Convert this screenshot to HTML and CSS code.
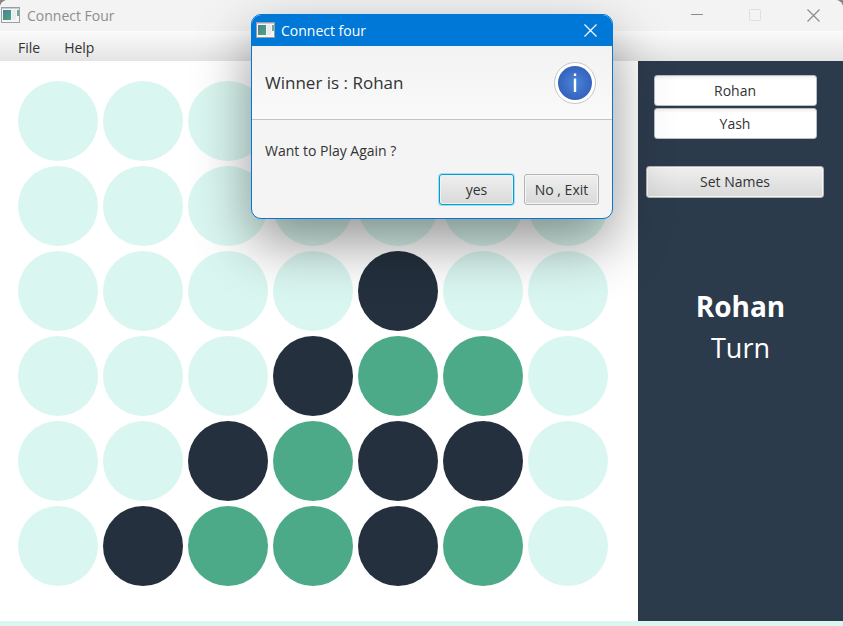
FILE: index.html
```html
<!DOCTYPE html>
<html lang="en">
<head>
<meta charset="utf-8">
<title>Connect Four</title>
<link rel="stylesheet" href="styles.css">
</head>
<body>
<svg class="defs" aria-hidden="true">
  <defs>
    <linearGradient id="pane" x1="0" y1="0" x2="1" y2="1">
      <stop offset="0" stop-color="#4b7fa0"/>
      <stop offset="1" stop-color="#4fa673"/>
    </linearGradient>
    <symbol id="app-icon" viewBox="0 0 19 16">
      <rect x="0.5" y="0.5" width="18" height="15" fill="#f4f6f6" stroke="#9a9fa6"/>
      <rect x="1" y="1" width="17" height="1" fill="#c9ced6"/>
      <rect x="2" y="3" width="8" height="10" fill="url(#pane)"/>
      <rect x="11" y="3" width="4" height="10" fill="#e9ecec"/>
      <rect x="16" y="3" width="2" height="6" fill="#4f9585" opacity="0.8"/>
    </symbol>
    <radialGradient id="info-fill">
      <stop offset="0" stop-color="#4a86d8"/>
      <stop offset="1" stop-color="#3561bd"/>
    </radialGradient>
  </defs>
</svg>

<div class="window">
  <header class="titlebar">
    <svg class="app-icon"><use href="#app-icon"/></svg>
    <h1 class="title">Connect Four</h1>
    <div class="controls">
      <button class="control" aria-label="Minimize"><svg width="13" height="13"><path d="M0 5.5H12" stroke="#8c8c8c"/></svg></button>
      <button class="control" aria-label="Maximize" disabled><svg width="13" height="13"><rect x="0.5" y="0.5" width="11" height="11" rx="1" fill="none" stroke="#dedede"/></svg></button>
      <button class="control" aria-label="Close"><svg width="13" height="13"><path d="M0.5 0.5L12.5 12.5M12.5 0.5L0.5 12.5" stroke="#8c8c8c" stroke-width="1.2"/></svg></button>
    </div>
  </header>
  <nav class="menubar">
    <button class="menu">File</button>
    <button class="menu">Help</button>
  </nav>
  <main class="game">
    <section class="board" aria-label="Board">
      <i></i><i></i><i></i><i></i><i></i><i></i><i></i>
      <i></i><i></i><i></i><i></i><i></i><i></i><i></i>
      <i></i><i></i><i></i><i></i><i class="dark"></i><i></i><i></i>
      <i></i><i></i><i></i><i class="dark"></i><i class="green"></i><i class="green"></i><i></i>
      <i></i><i></i><i class="dark"></i><i class="green"></i><i class="dark"></i><i class="dark"></i><i></i>
      <i></i><i class="dark"></i><i class="green"></i><i class="green"></i><i class="dark"></i><i class="green"></i><i></i>
    </section>
    <aside class="sidebar">
      <form class="names">
        <input class="name" type="text" value="Rohan" aria-label="Player one">
        <input class="name" type="text" value="Yash" aria-label="Player two">
        <button class="button set-names" type="button">Set Names</button>
      </form>
      <p class="player">Rohan</p>
      <p class="turn">Turn</p>
    </aside>
  </main>
</div>

<div class="dialog" role="dialog" aria-labelledby="dialog-title">
  <header class="dialog-bar">
    <svg class="app-icon"><use href="#app-icon"/></svg>
    <h2 class="title" id="dialog-title">Connect four</h2>
    <button class="dialog-close" aria-label="Close"><svg width="13" height="13"><path d="M0.5 0.5L12.5 12.5M12.5 0.5L0.5 12.5" stroke="#fff" stroke-width="1.2"/></svg></button>
  </header>
  <div class="dialog-header">
    <p class="winner">Winner is : Rohan</p>
    <svg class="info" width="42" height="42" viewBox="0 0 42 42" aria-hidden="true">
      <circle cx="21" cy="21" r="20.5" fill="#fff" stroke="#c6c6c6"/>
      <circle cx="21" cy="21" r="17" fill="url(#info-fill)"/>
      <rect x="19.8" y="11.5" width="2.4" height="2.5" fill="#fff"/>
      <rect x="19.8" y="16.5" width="2.4" height="13.5" fill="#fff"/>
    </svg>
  </div>
  <p class="question">Want to Play Again ?</p>
  <div class="actions">
    <button class="button default">yes</button>
    <button class="button">No , Exit</button>
  </div>
</div>
</body>
</html>
```

FILE: styles.css
```css
* {
  box-sizing: border-box;
}

body {
  margin: 0;
  background: #8b8580;
  color: #333;
  font: 14px/20px "Open Sans", "Noto Sans", sans-serif;
}

h1, h2, p {
  margin: 0;
  font-weight: 400;
}

button, input {
  font: inherit;
  color: inherit;
}

.defs {
  position: absolute;
  width: 0;
  height: 0;
}

.window {
  display: flex;
  flex-direction: column;
  min-height: 100vh;
  overflow: hidden;
  border-radius: 8px 8px 0 0;
  background: #fff;
}

.titlebar {
  display: flex;
  align-items: center;
  height: 31px;
  padding: 0 1px;
  background: #f3f3f3;
  color: #8e8e8e;
}

.app-icon {
  width: 19px;
  height: 16px;
  margin: 0 7px 2px 0;
}

.title {
  font-size: 14px;
}

.controls {
  display: flex;
  margin-left: auto;
}

.control {
  display: grid;
  place-items: center;
  width: 58px;
  height: 31px;
  padding: 0;
  border: 0;
  background: none;
}

.menubar {
  display: flex;
  gap: 24px;
  height: 30px;
  padding: 3px 18px 0;
  background: linear-gradient(#fbfbfb, #e4e4e4);
}

.menu {
  padding: 0;
  border: 0;
  background: none;
}

.game {
  display: flex;
  flex: 1;
  border-bottom: 5px solid #daf6f0;
}

.board {
  flex: 1;
  display: grid;
  grid-template-columns: repeat(7, 80px);
  grid-auto-rows: 80px;
  gap: 5px;
  padding: 20px 18px;
}

.board i {
  border-radius: 50%;
  background: #daf6f0;
}

.board .dark {
  background: #24303e;
}

.board .green {
  background: #4caa88;
}

.sidebar {
  width: 205px;
  background: #2c3b4c;
  color: #fff;
  text-align: center;
}

.names {
  display: flex;
  flex-direction: column;
  align-items: center;
  gap: 2px;
  padding: 14px 11px 0 0;
  color: #333;
}

.name {
  width: 163px;
  height: 31px;
  padding: 0;
  border: 1px solid #b9bcc0;
  border-radius: 3px;
  background: linear-gradient(#f0f0f0, #fff 4px);
  text-align: center;
}

.button {
  height: 31px;
  padding: 0 9px;
  border: 1px solid #b3b3b3;
  border-radius: 3px;
  background: linear-gradient(#efefef, #d9d9d9);
  box-shadow: inset 0 0 0 1px #f6f6f6;
}

.set-names {
  width: 178px;
  height: 32px;
  margin-top: 25px;
}

.player,
.turn {
  font-size: 28px;
  line-height: 41px;
}

.player {
  margin-top: 88px;
  font-weight: 700;
}

.turn {
  font-size: 27px;
}

.dialog {
  position: absolute;
  top: 14px;
  left: 251px;
  width: 362px;
  overflow: hidden;
  border: 1px solid #0078d7;
  border-radius: 10px;
  background: #f4f4f4;
  box-shadow: 0 24px 56px rgba(0, 0, 0, 0.42);
}

.dialog-bar {
  display: flex;
  align-items: center;
  height: 31px;
  padding-left: 4px;
  background: #0078d7;
  color: #fff;
}

.dialog-bar .app-icon {
  margin-right: 6px;
}

.dialog-close {
  display: grid;
  place-items: center;
  width: 43px;
  height: 31px;
  margin-left: auto;
  padding: 0;
  border: 0;
  background: none;
}

.dialog-header {
  display: flex;
  align-items: center;
  justify-content: space-between;
  height: 74px;
  padding: 0 16px 0 13px;
  border-bottom: 1px solid #c4c4c4;
  background: linear-gradient(#f2f2f2, #fafafa);
}

.winner {
  font-size: 17px;
}

.question {
  padding: 21px 13px 0;
}

.actions {
  display: flex;
  justify-content: flex-end;
  gap: 10px;
  padding: 13px 13px;
}

.actions .button {
  width: 75px;
  padding: 0;
}

.default {
  border-color: #039ed3;
  box-shadow: 0 0 0 1px #a6dcee, inset 0 0 0 1px #f0f0f0;
}
```
